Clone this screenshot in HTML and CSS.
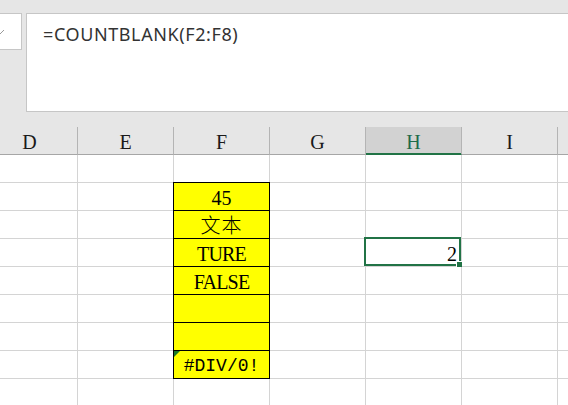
FILE: index.html
```html
<!DOCTYPE html>
<html lang="zh">
<head>
<meta charset="utf-8">
<title>COUNTBLANK</title>
<link rel="stylesheet" href="styles.css">
</head>
<body>
<div class="top">
  <div class="namebox"><svg class="chev" width="8" height="8" viewBox="0 0 8 8"><path d="M0 2 L4 6 L8 2" fill="none" stroke="#9a9a9a" stroke-width="1"/></svg></div>
  <div class="formula">=COUNTBLANK(F2:F8)</div>
</div>
<div class="sheet">
  <div class="hd">D</div><div class="hd">E</div><div class="hd">F</div><div class="hd">G</div><div class="hd sel">H</div><div class="hd">I</div><div class="hd"></div>

  <div class="c"></div><div class="c"></div><div class="c"></div><div class="c"></div><div class="c"></div><div class="c"></div><div class="c"></div>

  <div class="c"></div><div class="c"></div><div class="c y first">45</div><div class="c"></div><div class="c"></div><div class="c"></div><div class="c"></div>

  <div class="c"></div><div class="c"></div><div class="c y cjk">文本</div><div class="c"></div><div class="c"></div><div class="c"></div><div class="c"></div>

  <div class="c"></div><div class="c"></div><div class="c y">TURE</div><div class="c"></div><div class="c num active">2<span class="frame"><span class="handle"></span></span></div><div class="c"></div><div class="c"></div>

  <div class="c"></div><div class="c"></div><div class="c y">FALSE</div><div class="c"></div><div class="c"></div><div class="c"></div><div class="c"></div>

  <div class="c"></div><div class="c"></div><div class="c y"></div><div class="c"></div><div class="c"></div><div class="c"></div><div class="c"></div>

  <div class="c"></div><div class="c"></div><div class="c y"></div><div class="c"></div><div class="c"></div><div class="c"></div><div class="c"></div>

  <div class="c"></div><div class="c"></div><div class="c y err">#DIV/0!</div><div class="c"></div><div class="c"></div><div class="c"></div><div class="c"></div>

  <div class="c"></div><div class="c"></div><div class="c"></div><div class="c"></div><div class="c"></div><div class="c"></div><div class="c"></div>
</div>
</body>
</html>
```
FILE: styles.css
```css
* { box-sizing: border-box; }
html, body {
  margin: 0;
  padding: 0;
  width: 568px;
  height: 405px;
  overflow: hidden;
  background: #ffffff;
}
.top {
  height: 127px;
  background: #e6e6e6;
  padding-top: 13px;
  display: flex;
  align-items: flex-start;
  gap: 4px;
  overflow: hidden;
}
.namebox {
  width: 22px;
  height: 37px;
  background: #ffffff;
  border: 1px solid #c6c6c6;
  border-left: none;
  position: relative;
  overflow: hidden;
}
.chev {
  position: absolute;
  left: -4px;
  top: 14px;
}
.formula {
  flex: 1;
  height: 99px;
  margin-right: -10px;
  background: #ffffff;
  border: 1px solid #c6c6c6;
  padding: 8px 0 0 16px;
  font-family: "Noto Sans", "Liberation Sans", sans-serif;
  font-size: 18px;
  letter-spacing: 0.6px;
  line-height: 24px;
  color: #333333;
}
.sheet {
  display: grid;
  grid-template-columns: repeat(6, 96px) 1fr;
  grid-auto-rows: 28px;
  margin-left: -18px;
  width: 600px;
  font-family: "Liberation Serif", "Times New Roman", serif;
  font-size: 20px;
  color: #000000;
}
.hd {
  background: #e6e6e6;
  border-right: 1px solid #b4b4b4;
  border-bottom: 1px solid #a6a6a6;
  text-align: center;
  line-height: 23px;
  padding-top: 4px;
  color: #1a1a1a;
}
.hd.sel {
  background: #d2d2d2;
  color: #1e6b4a;
  border-bottom-color: #217346;
  box-shadow: inset 0 -1px 0 #217346;
}
.c {
  border-right: 1px solid #d4d4d4;
  border-bottom: 1px solid #d4d4d4;
  line-height: 25px;
  padding-top: 3px;
  text-align: center;
  white-space: nowrap;
  position: relative;
}
.c.y {
  background: #ffff00;
  border-right-color: #000000;
  border-bottom-color: #000000;
  box-shadow: -1px 0 0 #000000;
  letter-spacing: -0.8px;
}
.c.y.first {
  box-shadow: -1px 0 0 #000000, -1px -1px 0 #000000, 0 -1px 0 #000000;
  letter-spacing: 0;
}
.c.cjk {
  font-family: "Noto Sans CJK SC", "Noto Sans CJK JP", sans-serif;
  font-size: 20px;
  letter-spacing: 1px;
  line-height: 25px;
  padding-top: 1px;
  font-weight: 300;
}
.c.err {
  font-family: "Liberation Mono", "Courier New", monospace;
  font-size: 18px;
  letter-spacing: 0;
}
.c.err::before {
  content: "";
  position: absolute;
  left: 0;
  top: 0;
  border-top: 6px solid #1a7a2a;
  border-right: 6px solid transparent;
}
.c.num {
  text-align: right;
  padding-right: 4px;
}
.frame {
  position: absolute;
  left: -2px;
  top: -2px;
  right: 0;
  bottom: 0;
  border: 2px solid #217346;
}
.handle {
  position: absolute;
  right: -4px;
  bottom: -4px;
  width: 7px;
  height: 7px;
  background: #217346;
  border: 1px solid #ffffff;
}
```
